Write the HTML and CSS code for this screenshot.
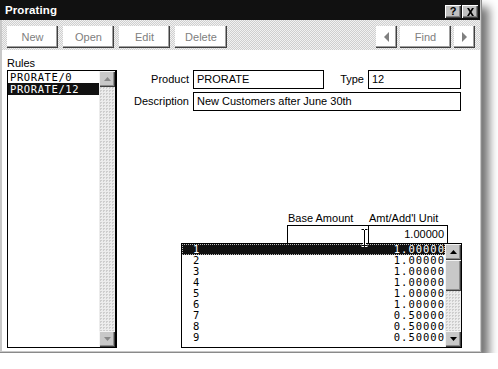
FILE: index.html
```html
<!DOCTYPE html>
<html lang="en">
<head>
  <meta charset="UTF-8">
  <title>Prorating</title>
  <link rel="stylesheet" href="styles.css">
</head>
<body>
  <div class="window">
    <div class="titlebar">
      <span class="title">Prorating</span>
      <div class="caption-buttons">
        <span class="cap-btn help">?</span>
        <span class="cap-btn">
          <svg width="9" height="8" viewBox="0 0 9 8"><path d="M1 0h2l1.5 2.5L6 0h2L5.5 4 8 8H6L4.5 5.5 3 8H1l2.5-4z" fill="#000"/></svg>
        </span>
      </div>
    </div>

    <div class="toolbar">
      <div class="tool-group">
        <button class="tool-btn">New</button>
        <button class="tool-btn">Open</button>
        <button class="tool-btn">Edit</button>
        <button class="tool-btn wide">Delete</button>
      </div>
      <div class="tool-group nav">
        <button class="tool-btn arrow">
          <svg width="5" height="10" viewBox="0 0 5 10"><path d="M5 0v10L0 5z" fill="#808080"/></svg>
        </button>
        <button class="tool-btn">Find</button>
        <button class="tool-btn arrow">
          <svg width="5" height="10" viewBox="0 0 5 10"><path d="M0 0v10l5-5z" fill="#808080"/></svg>
        </button>
      </div>
    </div>

    <div class="content">
      <div class="rules">
        <div class="caption">Rules</div>
        <div class="listbox">
          <ul class="list-items">
            <li>PRORATE/0</li>
            <li class="selected">PRORATE/12</li>
          </ul>
          <div class="scrollbar">
            <div class="scroll-btn">
              <svg width="7" height="4" viewBox="0 0 7 4"><path d="M3.5 0L7 4H0z" fill="#888"/></svg>
            </div>
            <div class="scroll-track"></div>
            <div class="scroll-btn">
              <svg width="7" height="4" viewBox="0 0 7 4"><path d="M0 0h7L3.5 4z" fill="#888"/></svg>
            </div>
          </div>
        </div>
      </div>

      <div class="details">
        <div class="form">
          <label class="field-label">Product</label>
          <div class="field">PRORATE</div>
          <label class="field-label">Type</label>
          <div class="field">12</div>
          <label class="field-label">Description</label>
          <div class="field span-3">New Customers after June 30th</div>
        </div>

        <div class="amounts">
          <div class="amount-col">
            <div class="amount-label">Base Amount</div>
            <div class="field amount"></div>
          </div>
          <div class="amount-col second">
            <div class="amount-label">Amt/Add'l Unit</div>
            <div class="field amount number">1.00000</div>
          </div>
          <svg class="ibeam" width="7" height="19" viewBox="0 0 7 19">
            <path d="M0.5 1.5h2.5M4 1.5h2.5M3.5 2v15M0.5 17.5h2.5M4 17.5h2.5" stroke="#fff" stroke-width="3"/>
            <path d="M0.5 1.5h2.5M4 1.5h2.5M3.5 2v15M0.5 17.5h2.5M4 17.5h2.5" stroke="#000" stroke-width="1"/>
          </svg>
        </div>

        <div class="grid">
          <div class="grid-rows">
            <div class="grid-row selected"><span>1</span><span>1.00000</span></div>
            <div class="grid-row"><span>2</span><span>1.00000</span></div>
            <div class="grid-row"><span>3</span><span>1.00000</span></div>
            <div class="grid-row"><span>4</span><span>1.00000</span></div>
            <div class="grid-row"><span>5</span><span>1.00000</span></div>
            <div class="grid-row"><span>6</span><span>1.00000</span></div>
            <div class="grid-row"><span>7</span><span>0.50000</span></div>
            <div class="grid-row"><span>8</span><span>0.50000</span></div>
            <div class="grid-row"><span>9</span><span>0.50000</span></div>
          </div>
          <div class="scrollbar">
            <div class="scroll-btn">
              <svg width="7" height="4" viewBox="0 0 7 4"><path d="M3.5 0L7 4H0z" fill="#000"/></svg>
            </div>
            <div class="scroll-thumb"></div>
            <div class="scroll-track"></div>
            <div class="scroll-btn">
              <svg width="7" height="4" viewBox="0 0 7 4"><path d="M0 0h7L3.5 4z" fill="#000"/></svg>
            </div>
          </div>
        </div>
      </div>
    </div>
  </div>
</body>
</html>
```

FILE: styles.css
```css
body {
  margin: 0;
  background: #fff;
  font-family: 'Liberation Sans', Arial, sans-serif;
  font-size: 11px;
  color: #000;
}

.window {
  position: relative;
  width: 482px;
  height: 353px;
  box-sizing: border-box;
  padding: 0 2px 2px 2px;
  background: #c8c8c8;
  box-shadow: inset -1px -1px #8a8a8a, 7px 7px 9px rgba(0, 0, 0, 0.55);
  display: flex;
  flex-direction: column;
}

/* title bar */
.titlebar {
  height: 20px;
  margin: 0 0 0 -2px;
  background: #111;
  display: flex;
  align-items: center;
  justify-content: space-between;
  padding: 0 2px 0 5px;
}

.title {
  color: #fff;
  font-weight: bold;
  font-size: 11.5px;
  letter-spacing: 0.1px;
}

.caption-buttons {
  display: flex;
  gap: 1px;
  margin-top: 3px;
}

.cap-btn {
  width: 16px;
  height: 13px;
  box-sizing: border-box;
  background: #c0c0c0;
  box-shadow: inset 1px 1px #fff, inset -1px -1px #404040, inset -2px -2px #808080;
  display: flex;
  align-items: center;
  justify-content: center;
}

.cap-btn.help {
  font-weight: bold;
  font-size: 11px;
  line-height: 13px;
  padding-bottom: 1px;
}

/* toolbar */
.toolbar {
  height: 30px;
  box-sizing: border-box;
  padding: 6px 5px 0 5px;
  display: flex;
  justify-content: space-between;
  background: repeating-conic-gradient(#cfcfcf 0 25%, #f2f2f2 0 50%) 0 0 / 2px 2px;
}

.tool-group {
  display: flex;
  gap: 5px;
}

.tool-group.nav {
  gap: 3px;
}

.tool-btn {
  width: 51px;
  height: 22px;
  border: none;
  padding: 0;
  background: #fff;
  box-shadow: inset -1px -1px #404040, inset -2px -2px #a0a0a0;
  font-family: 'Liberation Sans', Arial, sans-serif;
  font-size: 11px;
  color: #808080;
  display: flex;
  align-items: center;
  justify-content: center;
}

.tool-btn.wide {
  width: 52px;
}

.tool-btn.arrow {
  width: 21px;
}

/* content */
.content {
  flex: 1;
  background: #fff;
  display: flex;
}

.rules {
  padding: 6px 0 0 5px;
}

.caption {
  line-height: 14px;
}

.listbox {
  width: 110px;
  height: 278px;
  box-sizing: border-box;
  border: 1px solid #000;
  border-right-width: 2px;
  display: flex;
}

.list-items {
  list-style: none;
  margin: 0;
  padding: 0;
  flex: 1;
  font-family: 'DejaVu Sans Mono', monospace;
  font-size: 10.5px;
  letter-spacing: 0.6px;
}

.list-items li {
  height: 12px;
  line-height: 12px;
  padding-left: 2px;
}

.list-items li.selected {
  background: #111;
  color: #fff;
}

/* scrollbars */
.scrollbar {
  width: 16px;
  display: flex;
  flex-direction: column;
}

.scroll-btn,
.scroll-thumb {
  background: #c8c8c8;
  box-shadow: inset 1px 1px #f4f4f4, inset -1px -1px #404040, inset -2px -2px #8c8c8c;
}

.scroll-btn {
  height: 16px;
  display: flex;
  align-items: center;
  justify-content: center;
}

.scroll-thumb {
  height: 31px;
}

.scroll-track {
  flex: 1;
  background: repeating-conic-gradient(#cdcdcd 0 25%, #ececec 0 100%) 0 0 / 3px 3px;
}

/* details form */
.details {
  flex: 1;
  padding-top: 20px;
}

.form {
  display: grid;
  grid-template-columns: 76px 131px 44px 93px;
  grid-auto-rows: 19px;
  row-gap: 3px;
}

.field-label {
  text-align: right;
  padding-right: 4px;
  line-height: 19px;
}

.field {
  box-sizing: border-box;
  border: 1px solid #000;
  height: 19px;
  line-height: 17px;
  padding: 0 3px;
  white-space: nowrap;
}

.span-3 {
  grid-column: span 3;
}

.amounts {
  position: relative;
  display: flex;
  margin: 100px 0 0 170px;
}

.amount-col {
  width: 82px;
}

.amount-col.second {
  width: 80px;
  margin-left: -1px;
}

.amount-label {
  line-height: 14px;
  padding-left: 1px;
}

.field.amount {
  height: 19px;
}

.field.number {
  text-align: right;
}

.ibeam {
  position: absolute;
  left: 74px;
  top: 17px;
}

/* amount grid */
.grid {
  margin: -1px 0 0 64px;
  width: 281px;
  height: 105px;
  box-sizing: border-box;
  border: 1px solid #000;
  display: flex;
}

.grid-rows {
  flex: 1;
  font-family: 'DejaVu Sans Mono', monospace;
  font-size: 10.5px;
  letter-spacing: 1px;
}

.grid-row {
  height: 11px;
  line-height: 11px;
  display: flex;
  justify-content: space-between;
  padding: 0 0 0 11px;
}

.grid-row.selected {
  background: #111;
  color: #fff;
  outline: 1px dotted #bbb;
  outline-offset: -1px;
}
```
